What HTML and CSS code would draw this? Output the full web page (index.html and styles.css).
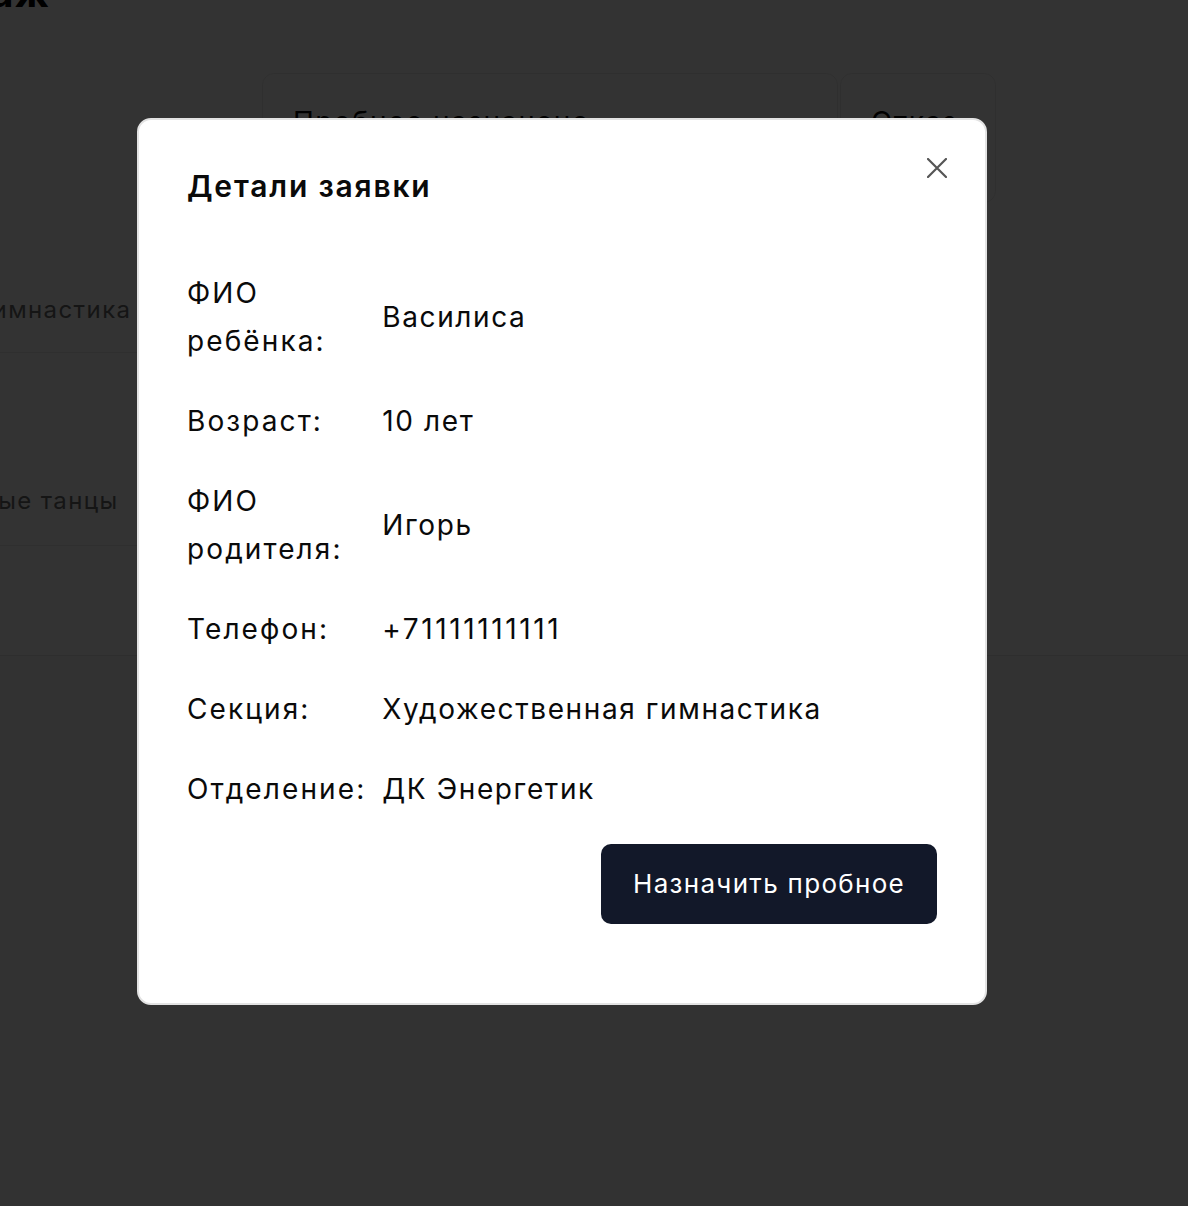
FILE: index.html
```html
<!DOCTYPE html>
<html lang="ru">
<head>
<meta charset="utf-8">
<title>Детали заявки</title>
<link rel="stylesheet" href="styles.css">
</head>
<body>
<div class="page">
  <div class="page-title-wrap"><h1 class="page-title">Воронка продаж</h1></div>
  <div class="board">
    <div class="column column-new">
      <div class="column-head">Новые заявки</div>
      <div class="card">Художественная гимнастика</div>
      <div class="card">Спортивные бальные танцы</div>
    </div>
    <div class="column column-trial">
      <div class="column-head">Пробное назначено</div>
    </div>
    <div class="column column-refuse">
      <div class="column-head">Отказ</div>
    </div>
  </div>
</div>

<div class="overlay"></div>

<div class="modal" role="dialog" aria-labelledby="modal-title">
  <h2 class="modal-title" id="modal-title">Детали заявки</h2>
  <button class="modal-close" aria-label="Закрыть">
    <svg width="20" height="20" viewBox="0 0 20 20"><path d="M1 1L19 19M19 1L1 19" stroke="#555" stroke-width="2.2" stroke-linecap="round"/></svg>
  </button>
  <dl class="details">
    <dt>ФИО ребёнка:</dt><dd>Василиса</dd>
    <dt>Возраст:</dt><dd>10 лет</dd>
    <dt>ФИО родителя:</dt><dd>Игорь</dd>
    <dt>Телефон:</dt><dd class="phone">+71111111111</dd>
    <dt>Секция:</dt><dd>Художественная гимнастика</dd>
    <dt>Отделение:</dt><dd>ДК Энергетик</dd>
  </dl>
  <div class="modal-actions">
    <button class="btn-primary">Назначить пробное</button>
  </div>
</div>
</body>
</html>
```

FILE: styles.css
```css
* { box-sizing: border-box; }

html, body {
  margin: 0;
  padding: 0;
  height: 100%;
  overflow: hidden;
}

body {
  font-family: Inter, "Noto Sans", "Liberation Sans", sans-serif;
  background: #fafafa;
  color: #111;
}

/* ---------- background page (dimmed) ---------- */
.page {
  display: flex;
  flex-direction: column;
  background: #ffffff;
  border-bottom: 1px solid #e6e6e6;
  height: 656px;
}

.page-title-wrap {
  width: 50px;
  display: flex;
  justify-content: flex-end;
  white-space: nowrap;
  margin-top: -31px;
  height: 48px;
  flex: none;
}

.page-title {
  margin: 0;
  font-size: 40px;
  line-height: 48px;
  font-weight: 700;
  letter-spacing: 1px;
  color: #000;
}

.board {
  display: flex;
  margin-top: 56px;
  margin-left: -273px;
}

.column {
  border: 1px solid #ececec;
  border-radius: 12px;
  padding: 28px 30px 0;
  flex: none;
}

.column-new {
  width: 501px;
  border-color: transparent;
  padding-left: 26px;
  padding-right: 0;
}

.column-trial {
  width: 576px;
  margin-left: 34px;
}

.column-refuse {
  width: 156px;
  margin-left: 2px;
  height: 130px;
}

.column-head {
  font-size: 28px;
  line-height: 40px;
  letter-spacing: 1.4px;
  color: #000;
  white-space: nowrap;
}

.column-new .column-head { visibility: hidden; }

.card {
  font-size: 24px;
  line-height: 32px;
  letter-spacing: 1.4px;
  color: #6b6b6b;
  border-bottom: 1px solid #ececec;
  padding: 152px 0 26px;
  white-space: nowrap;
}

.card + .card {
  padding-top: 132px;
  padding-bottom: 28px;
}

/* ---------- overlay ---------- */
.overlay {
  position: fixed;
  inset: 0;
  background: rgba(0, 0, 0, 0.8);
}

/* ---------- modal ---------- */
.modal {
  position: fixed;
  left: 137px;
  top: 118px;
  width: 850px;
  background: #fff;
  border: 2px solid #e3e3e3;
  border-radius: 14px;
  padding: 48px 48px 48px;
}

.modal-title {
  margin: 0;
  font-size: 30px;
  line-height: 36px;
  font-weight: 600;
  letter-spacing: 1.8px;
  color: #0a0a0a;
}

.modal-close {
  position: absolute;
  top: 38px;
  right: 38px;
  width: 20px;
  height: 20px;
  padding: 0;
  border: 0;
  background: none;
  display: flex;
}

.details {
  display: grid;
  grid-template-columns: min-content 1fr;
  column-gap: 16px;
  row-gap: 32px;
  margin: 65px 0 0;
  font-size: 28px;
  line-height: 48px;
  color: #0a0a0a;
}

.details dt,
.details dd {
  margin: 0;
  display: flex;
  align-items: center;
}

.details dt { letter-spacing: 2.1px; }
.details dd { letter-spacing: 1.6px; }
.details dd.phone { letter-spacing: 2.6px; }

.modal-actions {
  display: flex;
  justify-content: flex-end;
  margin-top: 31px;
  margin-bottom: 31px;
}

.btn-primary {
  font-family: inherit;
  font-size: 26px;
  line-height: 48px;
  letter-spacing: 1.3px;
  padding: 16px 32px;
  color: #fff;
  background: #121829;
  border: 0;
  border-radius: 10px;
}
```
